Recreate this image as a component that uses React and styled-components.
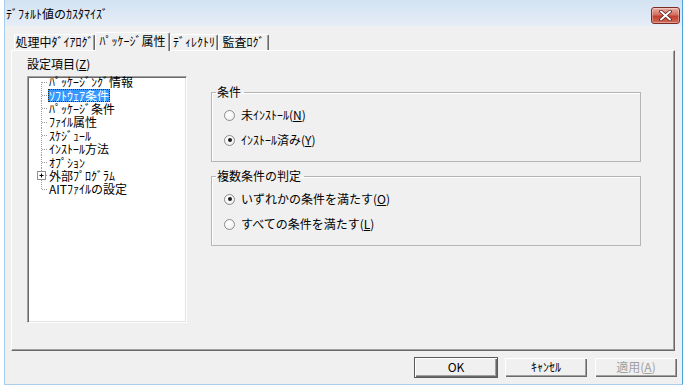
import React from "react";
import styled, { createGlobalStyle } from "styled-components";

const GlobalStyle = createGlobalStyle`
  html, body {
    margin: 0;
    padding: 0;
    background: #fff;
  }
  body {
    font-family: "Noto Sans CJK JP", "Noto Sans", sans-serif;
    font-size: 12px;
    color: #000;
  }
`;

const Dialog = styled.div`
  box-sizing: border-box;
  width: 679px;
  height: 385px;
  margin-left: 4px;
  border: 1px solid #a8cdee;
  border-top: none;
  border-right-color: #4aa3e0;
  display: flex;
  flex-direction: column;
  background: #f0f0f0;
`;

const TitleBar = styled.div`
  height: 26px;
  box-sizing: border-box;
  padding: 7px 2px 0 1px;
  display: flex;
  justify-content: space-between;
  align-items: flex-start;
  background: linear-gradient(to bottom, #d3e2f1, #e6eef7);
  line-height: 14px;
`;

const CloseButton = styled.div`
  box-sizing: border-box;
  width: 29px;
  height: 17px;
  border: 1px solid #7a2c24;
  border-radius: 3px;
  background: linear-gradient(to bottom, #eab0a4 0%, #d46f60 45%, #c2402f 55%, #d46a55 100%);
  box-shadow: inset 0 0 0 1px rgba(255, 255, 255, 0.35);
  display: flex;
  align-items: center;
  justify-content: center;
`;

const Body = styled.div`
  flex: 1;
  display: flex;
  flex-direction: column;
  padding: 6px 4px 0 6px;
`;

const TabStrip = styled.div`
  display: flex;
  align-items: flex-end;
  height: 18px;
  padding-left: 3px;
  position: relative;
  z-index: 1;
`;

const Tab = styled.div`
  box-sizing: border-box;
  width: ${(p) => p.$width}px;
  height: ${(p) => (p.$active ? 19 : 16)}px;
  margin-bottom: ${(p) => (p.$active ? -1 : 0)}px;
  border-top: 1px solid #fff;
  border-left: 1px solid #fff;
  border-right: 1px solid #696969;
  border-radius: 2px 2px 0 0;
  box-shadow: inset -1px 0 0 #a0a0a0;
  background: #f0f0f0;
  text-align: center;
  line-height: ${(p) => (p.$active ? 16 : 14)}px;
  white-space: nowrap;
`;

const Panel = styled.div`
  box-sizing: border-box;
  height: 301px;
  margin-right: 3px;
  border-top: 1px solid #fff;
  border-left: 1px solid #fff;
  border-right: 1px solid #696969;
  border-bottom: 1px solid #696969;
  box-shadow: inset -1px -1px 0 #a0a0a0;
  display: flex;
  gap: 24px;
  padding: 6px 0 0 15px;
`;

const LeftColumn = styled.div`
  width: 160px;
  display: flex;
  flex-direction: column;
`;

const FieldLabel = styled.div`
  line-height: 14px;
  margin-bottom: 5px;
`;

const TreeBox = styled.div`
  box-sizing: border-box;
  height: 247px;
  background: #fff;
  border-top: 1px solid #a0a0a0;
  border-left: 1px solid #a0a0a0;
  border-right: 1px solid #fff;
  border-bottom: 1px solid #fff;
  box-shadow: inset 1px 1px 0 #696969, inset -1px -1px 0 #e3e3e3;
  padding: 0 0 0 2px;
`;

const TreeList = styled.div`
  margin-top: -2px;
  display: flex;
  flex-direction: column;
`;

const TreeRow = styled.div`
  height: 13.4px;
  display: flex;
  align-items: center;
  white-space: nowrap;
`;

const TreeLabel = styled.span`
  line-height: 13px;
  height: 13px;
  padding: 0 1px;
  ${(p) =>
    p.$selected &&
    `
    background: #3399ff;
    color: #fff;
    outline: 1px dotted #3a2a10;
    outline-offset: -1px;
  `}
`;

const RightColumn = styled.div`
  width: 430px;
  padding-top: 28px;
  display: flex;
  flex-direction: column;
  gap: 7px;
`;

const GroupBox = styled.fieldset`
  margin: 0;
  min-width: 0;
  padding: 9px 0 14px 12px;
  border: 1px solid #b5b5b5;
  box-shadow: inset 1px 1px 0 #fff;
  display: flex;
  flex-direction: column;
  gap: 11px;
`;

const Legend = styled.legend`
  margin-left: -8px;
  padding: 0 3px 0 1px;
  line-height: 14px;
`;

const RadioRow = styled.label`
  display: flex;
  align-items: center;
  gap: 6px;
  height: 14px;
  line-height: 14px;
`;

const RadioDot = styled.span`
  box-sizing: border-box;
  width: 11px;
  height: 11px;
  border-radius: 50%;
  border: 1px solid #8d8d8d;
  background: radial-gradient(circle at 40% 35%, #fff 0%, #f4f4f4 60%, #dcdcdc 100%);
  display: flex;
  align-items: center;
  justify-content: center;

  &::after {
    content: "";
    width: 4px;
    height: 4px;
    border-radius: 50%;
    background: ${(p) => (p.$checked ? "#1b1b1b" : "transparent")};
  }
`;

const Key = styled.span`
  text-decoration: underline;
  text-underline-offset: 1px;
`;

const ButtonRow = styled.div`
  display: flex;
  justify-content: flex-end;
  gap: 6px;
  margin-top: 6px;
`;

const Button = styled.div`
  box-sizing: border-box;
  width: 84px;
  height: 21px;
  background: #f0f0f0;
  border: 1px solid ${(p) => (p.$default ? "#5a5a5a" : "#f0f0f0")};
  box-shadow: inset 1px 1px 0 #fff, inset -1px -1px 0 #696969, inset -2px -2px 0 #a0a0a0;
  color: ${(p) => (p.$disabled ? "#a0a0a0" : "#000")};
  text-align: center;
  line-height: 18px;
`;

const treeItems = [
  { label: "ﾊﾟｯｹｰｼﾞﾝｸﾞ情報" },
  { label: "ｿﾌﾄｳｪｱ条件", selected: true },
  { label: "ﾊﾟｯｹｰｼﾞ条件" },
  { label: "ﾌｧｲﾙ属性" },
  { label: "ｽｹｼﾞｭｰﾙ" },
  { label: "ｲﾝｽﾄｰﾙ方法" },
  { label: "ｵﾌﾟｼｮﾝ" },
  { label: "外部ﾌﾟﾛｸﾞﾗﾑ", expandable: true },
  { label: "AITﾌｧｲﾙの設定" },
];

function TreeConnector({ first, last, expandable }) {
  const top = first ? 7 : 0;
  const bottom = last ? 7 : 14;
  return (
    <svg width="18" height="14" style={{ flexShrink: 0, overflow: "visible" }}>
      <line x1="11.5" y1={top} x2="11.5" y2={bottom} stroke="#9a9a9a" strokeDasharray="1 1" />
      {expandable ? (
        <>
          <rect x="7.5" y="3.5" width="8" height="8" fill="#fff" stroke="#8f8f8f" />
          <line x1="9.5" y1="7.5" x2="13.5" y2="7.5" stroke="#000" />
          <line x1="11.5" y1="5.5" x2="11.5" y2="9.5" stroke="#000" />
          <line x1="16" y1="7.5" x2="18" y2="7.5" stroke="#9a9a9a" strokeDasharray="1 1" />
        </>
      ) : (
        <line x1="12" y1="7.5" x2="18" y2="7.5" stroke="#9a9a9a" strokeDasharray="1 1" />
      )}
    </svg>
  );
}

function CloseIcon() {
  return (
    <svg width="13" height="11" viewBox="0 0 13 11">
      <path d="M2 1.5 L11 9.5 M11 1.5 L2 9.5" stroke="#5a1e18" strokeWidth="3.6" strokeLinecap="round" />
      <path d="M2 1.5 L11 9.5 M11 1.5 L2 9.5" stroke="#fff" strokeWidth="2" strokeLinecap="round" />
    </svg>
  );
}

export default function App() {
  return (
    <>
      <GlobalStyle />
      <Dialog>
        <TitleBar>
          <span>ﾃﾞﾌｫﾙﾄ値のｶｽﾀﾏｲｽﾞ</span>
          <CloseButton>
            <CloseIcon />
          </CloseButton>
        </TitleBar>
        <Body>
          <TabStrip>
            <Tab $width={81}>処理中ﾀﾞｲｱﾛｸﾞ</Tab>
            <Tab $width={75} $active>
              ﾊﾟｯｹｰｼﾞ属性
            </Tab>
            <Tab $width={48}>ﾃﾞｨﾚｸﾄﾘ</Tab>
            <Tab $width={51}>監査ﾛｸﾞ</Tab>
          </TabStrip>
          <Panel>
            <LeftColumn>
              <FieldLabel>
                設定項目(<Key>Z</Key>)
              </FieldLabel>
              <TreeBox>
                <TreeList>
                  {treeItems.map((item, i) => (
                    <TreeRow key={item.label}>
                      <TreeConnector
                        first={i === 0}
                        last={i === treeItems.length - 1}
                        expandable={item.expandable}
                      />
                      <TreeLabel $selected={item.selected}>{item.label}</TreeLabel>
                    </TreeRow>
                  ))}
                </TreeList>
              </TreeBox>
            </LeftColumn>
            <RightColumn>
              <GroupBox>
                <Legend>条件</Legend>
                <RadioRow>
                  <RadioDot />
                  <span>
                    未ｲﾝｽﾄｰﾙ(<Key>N</Key>)
                  </span>
                </RadioRow>
                <RadioRow>
                  <RadioDot $checked />
                  <span>
                    ｲﾝｽﾄｰﾙ済み(<Key>Y</Key>)
                  </span>
                </RadioRow>
              </GroupBox>
              <GroupBox>
                <Legend>複数条件の判定</Legend>
                <RadioRow>
                  <RadioDot $checked />
                  <span>
                    いずれかの条件を満たす(<Key>O</Key>)
                  </span>
                </RadioRow>
                <RadioRow>
                  <RadioDot />
                  <span>
                    すべての条件を満たす(<Key>L</Key>)
                  </span>
                </RadioRow>
              </GroupBox>
            </RightColumn>
          </Panel>
          <ButtonRow>
            <Button $default>OK</Button>
            <Button>ｷｬﾝｾﾙ</Button>
            <Button $disabled>
              適用(<Key>A</Key>)
            </Button>
          </ButtonRow>
        </Body>
      </Dialog>
    </>
  );
}
